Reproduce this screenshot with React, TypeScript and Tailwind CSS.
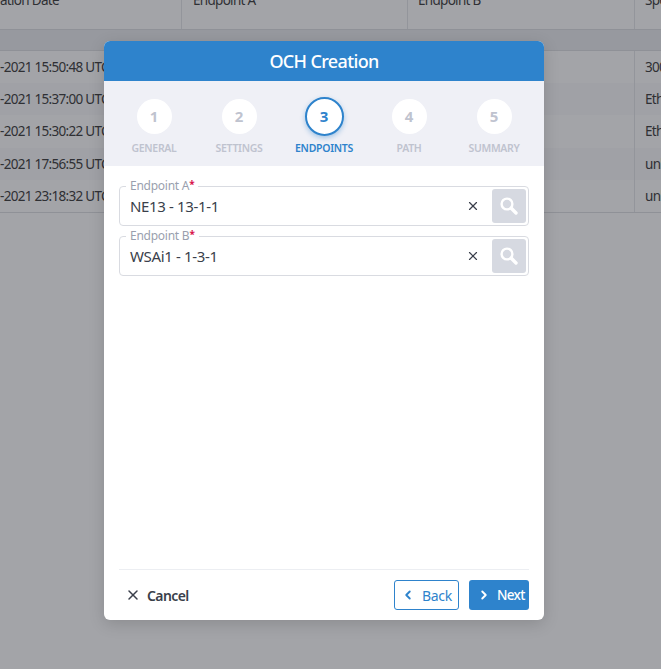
import { X, ChevronLeft, ChevronRight } from "lucide-react";

const font = "[font-family:'Noto_Sans','Liberation_Sans',sans-serif]";

const rows = [
  { date: "-2021 15:50:48 UTC", speed: "300G", shade: "bg-white" },
  { date: "-2021 15:37:00 UTC", speed: "Ethernet", shade: "bg-[#f9f9fb]" },
  { date: "-2021 15:30:22 UTC", speed: "Ethernet", shade: "bg-white" },
  { date: "-2021 17:56:55 UTC", speed: "unknown", shade: "bg-[#f9f9fb]" },
  { date: "-2021 23:18:32 UTC", speed: "unknown", shade: "bg-white" },
];

const steps = [
  { n: 1, label: "GENERAL" },
  { n: 2, label: "SETTINGS" },
  { n: 3, label: "ENDPOINTS", active: true },
  { n: 4, label: "PATH" },
  { n: 5, label: "SUMMARY" },
];

function HeaderCell({ label, className }: { label: string; className: string }) {
  return (
    <div className={`flex items-start justify-between border-r border-[#e3e4e8] pt-[2px] pr-[9px] ${className}`}>
      <span className="whitespace-nowrap">{label}</span>
      <span className="mt-[6px] h-0 w-0 border-x-[3px] border-t-[4px] border-x-transparent border-t-[#555]" />
    </div>
  );
}

function Table() {
  return (
    <div className="-mt-[12px] overflow-hidden text-[13.5px] tracking-[-0.7px] text-[#333]">
      <div className="flex h-[42px] border-b border-[#dcdde2] bg-white">
        <HeaderCell label="ation Date" className="w-[182px] shrink-0" />
        <HeaderCell label="Endpoint A" className="w-[226px] shrink-0 pl-[11px]" />
        <HeaderCell label="Endpoint B" className="w-[227px] shrink-0 pl-[10px]" />
        <div className="pl-[10px] pt-[2px]">Speed</div>
      </div>
      <div className="h-[21px] border-b border-[#dcdde2] bg-[#eaebef]" />
      {rows.map((r) => (
        <div key={r.date} className={`flex h-[32.2px] items-center ${r.shade}`}>
          <div className="w-[634px] shrink-0 whitespace-nowrap">{r.date}</div>
          <div className="flex h-full items-center whitespace-nowrap border-l border-[#e3e4e8] pl-[10px]">{r.speed}</div>
        </div>
      ))}
      <div className="border-t border-[#dcdde2]" />
    </div>
  );
}

function Stepper() {
  return (
    <div className="flex h-[85px] justify-center bg-[#eff0f6]">
      {steps.map((s) => (
        <div key={s.n} className="flex w-[85px] flex-col items-center">
          <div className="flex h-[55px] items-center pt-[16px]">
            {s.active ? (
              <div className="flex h-[39px] w-[39px] items-center justify-center rounded-full border-2 border-[#2e83cc] bg-white text-[15px] font-bold text-[#2e83cc] shadow-[0_2px_5px_rgba(46,131,204,0.4)]">
                {s.n}
              </div>
            ) : (
              <div className="flex h-[35px] w-[35px] items-center justify-center rounded-full bg-white text-[15px] font-bold text-[#bfc3cf]">
                {s.n}
              </div>
            )}
          </div>
          <div className={`mt-[5px] text-[10.5px] leading-[14px] font-semibold tracking-[-0.3px] whitespace-nowrap ${s.active ? "text-[#2e83cc]" : "text-[#bfc3cf]"}`}>
            {s.label}
          </div>
        </div>
      ))}
    </div>
  );
}

function SearchIcon() {
  return (
    <svg width="18" height="18" viewBox="0 0 18 18" fill="none" stroke="white">
      <circle cx="7" cy="7" r="5.4" strokeWidth="2.4" />
      <path d="M11.3 11.3 L16 16" strokeWidth="3.4" strokeLinecap="round" />
    </svg>
  );
}

function EndpointField({ label, value }: { label: string; value: string }) {
  return (
    <div className="relative flex h-[40px] items-center rounded-[4px] border border-[#d9dbe1] pl-[10px] pr-[2px]">
      <span className="absolute -top-[8px] left-[6px] bg-white px-[4px] text-[12px] leading-[14px] tracking-[-0.25px] text-[#9a9fae]">
        {label}
        <span className="relative -top-[2px] text-[10px] font-bold text-[#d8134b]">*</span>
      </span>
      <span className="flex-1 text-[15px] tracking-[-0.35px] text-[#3a3f4b]">{value}</span>
      <X size={14} strokeWidth={2} className="mr-[12px] text-[#3a3f4b]" />
      <div className="flex h-[34px] w-[34px] items-center justify-center rounded-[3px] bg-[#d6d9e1]">
        <SearchIcon />
      </div>
    </div>
  );
}

function Modal() {
  return (
    <div className="absolute left-[104px] top-[41px] flex h-[579px] w-[440px] flex-col overflow-hidden rounded-[6px] bg-white shadow-[0_4px_16px_rgba(0,0,0,0.15)]">
      <div className="flex h-[40px] items-center justify-center bg-[#2e83cc] text-[18px] font-medium tracking-[-0.65px] text-white">
        OCH Creation
      </div>
      <Stepper />
      <div className="flex flex-1 flex-col gap-[10px] px-[15px] pt-[20px]">
        <EndpointField label="Endpoint A" value="NE13 - 13-1-1" />
        <EndpointField label="Endpoint B" value="WSAi1 - 1-3-1" />
      </div>
      <div className="mx-[15px] flex h-[51px] items-start justify-between border-t border-[#eceef2] pt-[10px]">
        <button className="flex h-[30px] items-center gap-[6px] pl-[6px] text-[14px] font-semibold tracking-[-0.6px] text-[#3a3f4b]">
          <X size={16} strokeWidth={2.25} />
          Cancel
        </button>
        <div className="flex gap-[10px]">
          <button className="flex h-[30px] w-[65px] items-center justify-center gap-[7px] rounded-[3px] border border-[#2e83cc] text-[14px] tracking-[-0.3px] text-[#2e83cc]">
            <ChevronLeft size={14} strokeWidth={3.25} />
            <span>Back</span>
          </button>
          <button className="flex h-[30px] w-[60px] items-center gap-[6px] rounded-[3px] bg-[#2e83cc] pl-[8px] text-[13.5px] font-medium tracking-[-0.7px] text-white">
            <ChevronRight size={14} strokeWidth={3.25} />
            Next
          </button>
        </div>
      </div>
    </div>
  );
}

export default function App() {
  return (
    <div className={`relative h-[669px] w-[661px] overflow-hidden bg-white ${font}`}>
      <Table />
      <div className="absolute inset-0 bg-[#2a2c35]/43" />
      <Modal />
    </div>
  );
}
